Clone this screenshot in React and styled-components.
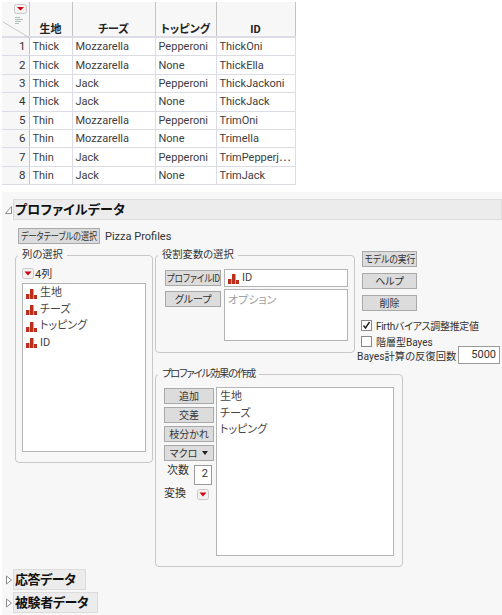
import styled, { createGlobalStyle } from "styled-components";

const GlobalStyle = createGlobalStyle`
  html, body {
    margin: 0;
    padding: 0;
    background: #fff;
  }
  body {
    font-family: Roboto, "Noto Sans CJK JP", sans-serif;
    font-feature-settings: "palt";
    font-size: 11px;
    color: #333;
  }
`;

const Page = styled.div`
  width: 502px;
  height: 615px;
  overflow: hidden;
`;

const TableWrap = styled.div`
  padding: 2px 0 0 2px;
  height: 192px;
  box-sizing: border-box;
`;
const Table = styled.table`
  border-collapse: collapse;
  table-layout: fixed;
  width: 293px;
`;
const HeadCell = styled.th`
  position: relative;
  height: 34px;
  padding: 0;
  vertical-align: bottom;
  background: #f7f7f7;
  border-right: 1px solid #c4c4c4;
  border-bottom: 2px solid #dcdce4;
  font-size: 11px;
  line-height: 13px;
  font-weight: 700;
  color: #222;
  text-align: center;
`;
const Corner = styled.svg`
  position: absolute;
  left: 0;
  top: 0;
`;
const NumCell = styled.td`
  height: 15.4px;
  padding: 1px 3px 1px 0;
  background: #f7f7f7;
  border-right: 1px solid #c4c4c4;
  border-bottom: 1px solid #dcdce4;
  text-align: right;
  font-size: 11.5px;
  line-height: 15px;
`;
const Cell = styled.td`
  padding: 1px 0 1px 3px;
  border-right: 1px solid #dcdce4;
  border-bottom: 1px solid #dcdce4;
  font-size: 11px;
  line-height: 15px;
  white-space: nowrap;
  overflow: hidden;
  color: #3d3d3d;
`;

const Panel = styled.div`
  margin-left: 2px;
  height: 423px;
  background: #f7f7f7;
  box-sizing: border-box;
  padding-top: 7px;
`;
const OutlineRow = styled.div`
  display: flex;
  align-items: center;
  margin-bottom: 2px;
`;
const Twist = styled.svg`
  width: 8px;
  height: 10px;
  margin-left: 3px;
  flex: none;
`;
const OutlineTitle = styled.div`
  ${(p) => (p.$wide ? "flex: 1;" : `width: ${p.$width}px;`)}
  height: 21px;
  box-sizing: border-box;
  background: #ececec;
  border: 1px solid #dcdcdc;
  padding-left: 1px;
  font-size: 13px;
  font-weight: 700;
  line-height: 19px;
  letter-spacing: ${(p) => (p.$wide ? "0.2px" : "-0.4px")};
  color: #111;
  white-space: nowrap;
`;

const Content = styled.div`
  padding: 6px 0 0 13px;
  height: 347px;
  box-sizing: border-box;
`;
const TopRow = styled.div`
  display: flex;
  align-items: center;
  gap: 5px;
  margin-left: 3px;
  height: 16px;
`;
const Button = styled.button`
  display: flex;
  align-items: center;
  justify-content: center;
  width: ${(p) => p.$width || 50}px;
  height: 16px;
  padding: 0;
  box-sizing: border-box;
  background: #dcdcdc;
  border: 1px solid #a9a9a9;
  font-family: inherit;
  font-feature-settings: "palt";
  font-size: 10px;
  line-height: 13px;
  color: #333;
  white-space: nowrap;
  overflow: hidden;
`;
/* Meiryo UI style narrow kana: real text squeezed to fit the button */
const Squeeze = styled.span`
  flex: none;
  transform: scaleX(${(p) => p.$x});
`;
const Columns = styled.div`
  display: flex;
  gap: 2px;
  margin-top: 4px;
`;
const Group = styled.fieldset`
  margin: 0;
  min-width: 0;
  width: ${(p) => p.$width}px;
  height: ${(p) => p.$height}px;
  box-sizing: border-box;
  padding: ${(p) => p.$pad};
  border: 1px solid #c8c8c8;
  border-radius: 4px;
`;
const Legend = styled.legend`
  margin-left: ${(p) => p.$inset}px;
  padding: 0 4px;
  font-size: 10.3px;
  line-height: 14px;
  letter-spacing: ${(p) => p.$tight || "0"};
  color: #333;
`;
const MenuRow = styled.div`
  display: flex;
  align-items: center;
  gap: 1px;
  height: 12px;
  font-size: 11px;
`;
const ListBox = styled.div`
  width: ${(p) => p.$width}px;
  height: ${(p) => p.$height}px;
  margin-top: ${(p) => p.$top || 0}px;
  box-sizing: border-box;
  padding: 1px 3px;
  background: #fff;
  border: 1px solid #b4b4b4;
  font-size: 11px;
  line-height: 16.5px;
  color: #444;
`;
const ListItem = styled.div`
  display: flex;
  align-items: center;
  gap: 3px;
  height: ${(p) => p.$h || 16.5}px;
`;
const Right = styled.div`
  display: flex;
  flex-direction: column;
`;
const RightTop = styled.div`
  display: flex;
  height: 119px;
`;
const RoleGrid = styled.div`
  display: grid;
  grid-template-columns: 56px 124px;
  grid-template-rows: 18px 52px;
  column-gap: 3px;
  row-gap: 2px;
`;
const RoleButton = styled(Button)`
  margin-top: ${(p) => p.$mt}px;
`;
const Placeholder = styled.div`
  margin-top: 2px;
  font-size: 11px;
  color: #a0a0a0;
`;
const Actions = styled.div`
  display: flex;
  flex-direction: column;
  padding-top: 3px;
  margin-left: 2px;
`;
const ActionButton = styled(Button)`
  width: 55px;
  margin: 0 0 6px 5px;
`;
const CheckRow = styled.label`
  display: flex;
  align-items: center;
  gap: 4px;
  height: 16px;
  margin-left: 4px;
  font-size: 10px;
  letter-spacing: ${(p) => p.$tight || "0"};
  white-space: nowrap;
`;
const Box = styled.span`
  width: 11px;
  height: 11px;
  box-sizing: border-box;
  background: #fff;
  border: 1px solid #8a8a8a;
  display: flex;
  flex: none;
`;
const BayesRow = styled.div`
  display: flex;
  justify-content: space-between;
  align-items: center;
  width: 143px;
  margin-top: -3px;
  font-size: 10.3px;
  white-space: nowrap;
`;
const NumberBox = styled.div`
  width: ${(p) => p.$width}px;
  height: ${(p) => p.$height}px;
  box-sizing: border-box;
  padding: 0 3px;
  background: #fff;
  border: 1px solid #9a9a9a;
  text-align: right;
  font-size: 11px;
  line-height: 15px;
  flex: none;
`;
const EffectGrid = styled.div`
  display: flex;
  gap: 2px;
`;
const EffectTools = styled.div`
  width: 50px;
  display: flex;
  flex-direction: column;
  gap: 3px;
  padding-top: 1px;
`;
const ToolLine = styled.div`
  display: flex;
  align-items: ${(p) => p.$align || "center"};
  justify-content: space-between;
  padding: ${(p) => p.$pad || "0"};
  font-size: 11px;
  line-height: 12px;
`;
const MacroCaret = styled.span`
  display: inline-block;
  margin-left: 5px;
  border-left: 3.5px solid transparent;
  border-right: 3.5px solid transparent;
  border-top: 4px solid #222;
`;

function RedMenu() {
  return (
    <svg width="12" height="11" viewBox="0 0 12 11">
      <rect x="0.5" y="0.5" width="11" height="10" rx="2" fill="#f4f0f0" stroke="#c8c8c8" />
      <path d="M2.5 3.5h7L6 7.5z" fill="#d40012" />
    </svg>
  );
}

function NominalIcon() {
  return (
    <svg width="11" height="11" viewBox="0 0 11 11" style={{ flex: "none" }}>
      <path d="M0 6h3.5v5H0zM4 1h3.5v10H4zM8 7h3v4H8z" fill="#b8301c" />
    </svg>
  );
}

function CollapseIcon({ open }) {
  return (
    <Twist viewBox="0 0 8 10">
      {open ? (
        <path d="M6.5 1.5v7h-6z" fill="#fff" stroke="#8c8c8c" />
      ) : (
        <path d="M1.5 1v8l5-4z" fill="#fff" stroke="#8c8c8c" />
      )}
    </Twist>
  );
}

const rows = [
  ["Thick", "Mozzarella", "Pepperoni", "ThickOni"],
  ["Thick", "Mozzarella", "None", "ThickElla"],
  ["Thick", "Jack", "Pepperoni", "ThickJackoni"],
  ["Thick", "Jack", "None", "ThickJack"],
  ["Thin", "Mozzarella", "Pepperoni", "TrimOni"],
  ["Thin", "Mozzarella", "None", "Trimella"],
  ["Thin", "Jack", "Pepperoni", "TrimPepperj\u22EF"],
  ["Thin", "Jack", "None", "TrimJack"],
];

const columns = ["生地", "チーズ", "トッピング", "ID"];

function DataTable() {
  return (
    <TableWrap>
      <Table>
        <colgroup>
          <col width="27" />
          <col width="43" />
          <col width="83" />
          <col width="61" />
          <col width="79" />
        </colgroup>
        <thead>
          <tr>
            <HeadCell>
              <Corner width="28" height="36" viewBox="0 0 28 36">
                <rect x="12.5" y="2.5" width="12" height="9" rx="2" fill="#f4f0f0" stroke="#c8c8c8" />
                <path d="M15 5h7l-3.5 3.5z" fill="#d40012" />
                <path d="M13 15.5h5M13 17.5h8M13 19.5h6M13 21.5h4" stroke="#a9bcb4" strokeWidth="1" />
                <path d="M1 20l27 16" stroke="#c8c8c8" strokeWidth="1" fill="none" />
              </Corner>
            </HeadCell>
            {columns.map((c) => (
              <HeadCell key={c}>{c}</HeadCell>
            ))}
          </tr>
        </thead>
        <tbody>
          {rows.map((r, i) => (
            <tr key={i}>
              <NumCell>{i + 1}</NumCell>
              {r.map((v, j) => (
                <Cell key={j}>{v}</Cell>
              ))}
            </tr>
          ))}
        </tbody>
      </Table>
    </TableWrap>
  );
}

export default function App() {
  return (
    <Page>
      <GlobalStyle />
      <DataTable />
      <Panel>
        <OutlineRow>
          <CollapseIcon open />
          <OutlineTitle $wide>プロファイルデータ</OutlineTitle>
        </OutlineRow>
        <Content>
          <TopRow>
            <Button $width={82}>
              <Squeeze $x={0.81}>データテーブルの選択</Squeeze>
            </Button>
            <span>Pizza Profiles</span>
          </TopRow>
          <Columns>
            <Group $width={138} $height={215} $pad="5px 6px 0">
              <Legend $inset={-4}>列の選択</Legend>
              <MenuRow>
                <RedMenu />
                <span>4列</span>
              </MenuRow>
              <ListBox $width={124} $height={169} $top={4}>
                {columns.map((c) => (
                  <ListItem key={c}>
                    <NominalIcon />
                    {c}
                  </ListItem>
                ))}
              </ListBox>
            </Group>
            <Right>
              <RightTop>
                <Group $width={200} $height={105} $pad="7px 6px 0 9px">
                  <Legend $inset={-7}>役割変数の選択</Legend>
                  <RoleGrid>
                    <RoleButton $width={56} $mt={1}>
                      <Squeeze $x={0.85}>プロファイルID</Squeeze>
                    </RoleButton>
                    <ListBox $width={124} $height={18}>
                      <ListItem $h={14}>
                        <NominalIcon />
                        ID
                      </ListItem>
                    </ListBox>
                    <RoleButton $width={56} $mt={2}>グループ</RoleButton>
                    <ListBox $width={124} $height={52}>
                      <Placeholder>オプション</Placeholder>
                    </ListBox>
                  </RoleGrid>
                </Group>
                <Actions>
                  <ActionButton>
                    <Squeeze $x={0.88}>モデルの実行</Squeeze>
                  </ActionButton>
                  <ActionButton>ヘルプ</ActionButton>
                  <ActionButton>削除</ActionButton>
                  <CheckRow $tight="-0.3px">
                    <Box>
                      <svg width="9" height="9" viewBox="0 0 9 9">
                        <path d="M1.5 4.5l2 2.5 4-6" fill="none" stroke="#222" strokeWidth="1.4" />
                      </svg>
                    </Box>
                    Firthバイアス調整推定値
                  </CheckRow>
                  <CheckRow>
                    <Box />
                    階層型Bayes
                  </CheckRow>
                  <BayesRow>
                    <span>Bayes計算の反復回数</span>
                    <NumberBox $width={42} $height={18}>5000</NumberBox>
                  </BayesRow>
                </Actions>
              </RightTop>
              <Group $width={248} $height={200} $pad="6px 0 0 8px">
                <Legend $inset={-6} $tight="-1.2px">プロファイル効果の作成</Legend>
                <EffectGrid>
                  <EffectTools>
                    <Button>追加</Button>
                    <Button>交差</Button>
                    <Button>枝分かれ</Button>
                    <Button>
                      マクロ
                      <MacroCaret />
                    </Button>
                    <ToolLine $align="flex-start" $pad="1px 2px 0 3px">
                      <span>次数</span>
                      <NumberBox $width={18} $height={20}>2</NumberBox>
                    </ToolLine>
                    <ToolLine $pad="0 5px 0 0">
                      <span>変換</span>
                      <RedMenu />
                    </ToolLine>
                  </EffectTools>
                  <ListBox $width={178} $height={169}>
                    {columns.slice(0, 3).map((c) => (
                      <ListItem key={c}>{c}</ListItem>
                    ))}
                  </ListBox>
                </EffectGrid>
              </Group>
            </Right>
          </Columns>
        </Content>
        <OutlineRow>
          <CollapseIcon />
          <OutlineTitle $width={73}>応答データ</OutlineTitle>
        </OutlineRow>
        <OutlineRow>
          <CollapseIcon />
          <OutlineTitle $width={85}>被験者データ</OutlineTitle>
        </OutlineRow>
      </Panel>
    </Page>
  );
}
